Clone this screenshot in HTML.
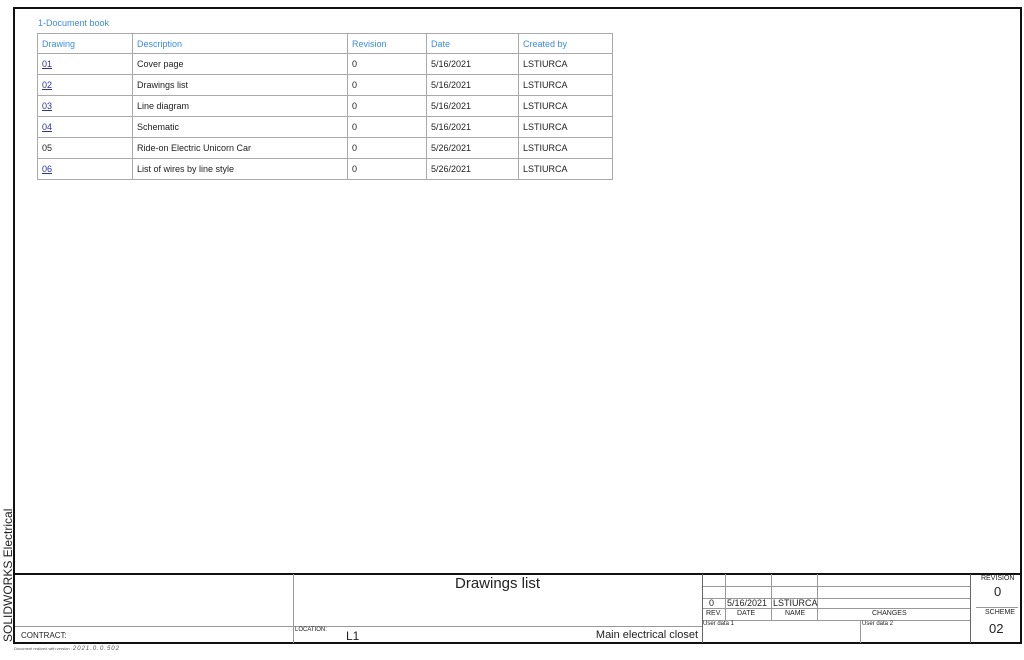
<!DOCTYPE html>
<html><head><meta charset="utf-8"><style>
*{margin:0;padding:0;box-sizing:border-box}
body{width:1024px;height:660px;background:#fff;position:relative;overflow:hidden;font-family:"Liberation Sans",sans-serif;color:#222}
.a{position:absolute}
.h{position:absolute;height:0;border-top:1px solid #999}
.v{position:absolute;width:0;border-left:1px solid #999}
.t{position:absolute;font-size:8px;white-space:nowrap}
table{position:absolute;left:37px;top:33px;border-collapse:collapse;font-size:9px}
td{border:1px solid #aaa;height:21px;padding:0 4px;vertical-align:middle}
.hd td{color:#3a8ee0;height:20px}
a{color:#3030a0;text-decoration:underline}
</style></head><body>
<div class="a" style="left:13px;top:7px;width:1009px;height:637px;border:2px solid #111"></div>
<div class="t" style="left:38px;top:18px;color:#3a8ee0;font-size:9px">1-Document book</div>
<table>
<colgroup><col style="width:95px"><col style="width:215px"><col style="width:79px"><col style="width:92px"><col style="width:94px"></colgroup>
<tr class="hd"><td>Drawing</td><td>Description</td><td>Revision</td><td>Date</td><td>Created by</td></tr>
<tr><td><a>01</a></td><td>Cover page</td><td>0</td><td>5/16/2021</td><td>LSTIURCA</td></tr>
<tr><td><a>02</a></td><td>Drawings list</td><td>0</td><td>5/16/2021</td><td>LSTIURCA</td></tr>
<tr><td><a>03</a></td><td>Line diagram</td><td>0</td><td>5/16/2021</td><td>LSTIURCA</td></tr>
<tr><td><a>04</a></td><td>Schematic</td><td>0</td><td>5/16/2021</td><td>LSTIURCA</td></tr>
<tr><td>05</td><td>Ride-on Electric Unicorn Car</td><td>0</td><td>5/26/2021</td><td>LSTIURCA</td></tr>
<tr><td><a>06</a></td><td>List of wires by line style</td><td>0</td><td>5/26/2021</td><td>LSTIURCA</td></tr>
</table>
<div class="t" style="left:-58px;top:568px;width:132px;height:16px;line-height:16px;font-size:12px;text-align:right;transform:rotate(-90deg)">SOLIDWORKS Electrical</div>
<div class="a" style="left:13px;top:573px;width:1009px;border-top:2px solid #111"></div>
<div class="h" style="left:15px;top:626px;width:688px"></div>
<div class="v" style="left:293px;top:574px;height:69px"></div>
<div class="v" style="left:702px;top:574px;height:69px;border-color:#666"></div>
<div class="t" style="left:21px;top:631px;font-size:8px">CONTRACT:</div>
<div class="t" style="left:295px;top:627px;font-size:6px">LOCATION:</div>
<div class="t" style="left:346px;top:629px;font-size:12px">L1</div>
<div class="t" style="right:326px;top:629px;font-size:11px">Main electrical closet</div>
<div class="t" style="left:455px;top:575px;font-size:15px">Drawings list</div>
<div class="h" style="left:703px;top:586px;width:267px"></div>
<div class="h" style="left:703px;top:598px;width:267px"></div>
<div class="h" style="left:703px;top:608px;width:267px"></div>
<div class="h" style="left:703px;top:620px;width:267px"></div>
<div class="v" style="left:725px;top:574px;height:46px"></div>
<div class="v" style="left:771px;top:574px;height:46px"></div>
<div class="v" style="left:817px;top:574px;height:46px"></div>
<div class="v" style="left:860px;top:620px;height:23px"></div>
<div class="v" style="left:970px;top:574px;height:69px;border-color:#666"></div>
<div class="h" style="left:976px;top:607px;width:42px"></div>
<div class="t" style="left:709px;top:598px;font-size:9px">0</div>
<div class="t" style="left:727px;top:598px;font-size:9px">5/16/2021</div>
<div class="t" style="left:773px;top:598px;font-size:9px">LSTIURCA</div>
<div class="t" style="left:706px;top:610px;font-size:7px">REV.</div>
<div class="t" style="left:737px;top:610px;font-size:7px">DATE</div>
<div class="t" style="left:785px;top:610px;font-size:7px">NAME</div>
<div class="t" style="left:872px;top:610px;font-size:7px">CHANGES</div>
<div class="t" style="left:703px;top:621px;font-size:6px">User data 1</div>
<div class="t" style="left:862px;top:621px;font-size:6px">User data 2</div>
<div class="t" style="left:981px;top:575px;font-size:7px">REVISION</div>
<div class="t" style="left:994px;top:584px;font-size:13px">0</div>
<div class="t" style="left:985px;top:609px;font-size:7px">SCHEME</div>
<div class="t" style="left:989px;top:621px;font-size:13px">02</div>
<div class="t" style="left:14px;top:646px;font-size:4px;color:#555">Document realized with version : <span style="font-size:6px;font-style:italic;letter-spacing:1px">2021.0.0.502</span></div>
</body></html>
